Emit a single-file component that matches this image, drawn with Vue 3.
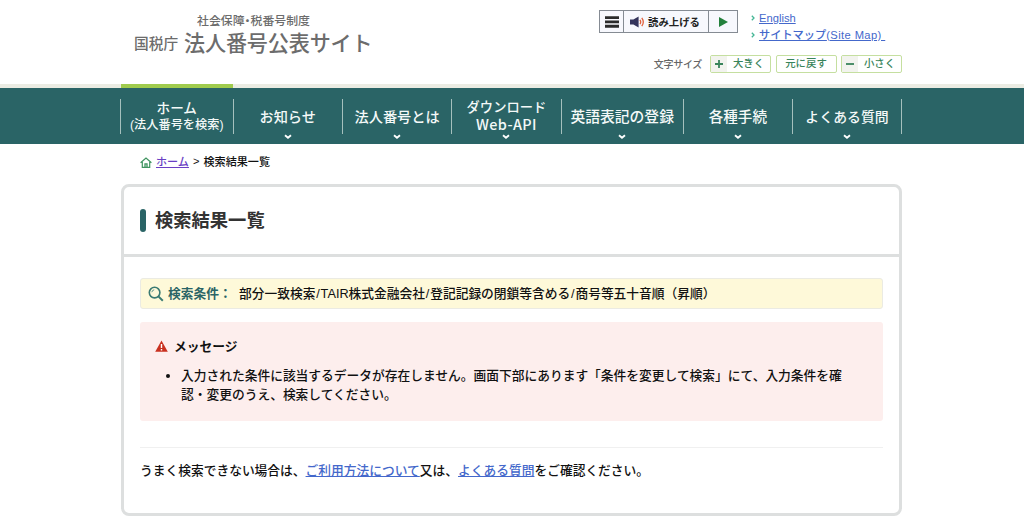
<script setup>
import { ref } from 'vue'

const menus = ref([
  { id: 'home', label: 'ホーム', sub: '(法人番号を検索)', arrow: false },
  { id: 'news', label: 'お知らせ', arrow: true },
  { id: 'about', label: '法人番号とは', arrow: true },
  { id: 'download', label: 'ダウンロード', sub: 'Web-API', arrow: true },
  { id: 'english', label: '英語表記の登録', arrow: true },
  { id: 'procedure', label: '各種手続', arrow: true },
  { id: 'faq', label: 'よくある質問', arrow: true },
])

const conditions = ref(['部分一致検索', 'TAIR株式金融会社', '登記記録の閉鎖等含める', '商号等五十音順（昇順）'])
const messages = ref([
  '入力された条件に該当するデータが存在しません。画面下部にあります「条件を変更して検索」にて、入力条件を確認・変更のうえ、検索してください。',
])
</script>

<template>
  <div class="page">
    <header class="header">
      <div class="logo">
        <p class="logo-sub">社会保障・税番号制度</p>
        <p class="logo-main"><span class="agency">国税庁</span><span class="site">法人番号公表サイト</span></p>
      </div>
      <div class="tools">
        <div class="tools-top">
          <div class="reader">
            <button class="reader-menu">
              <svg width="14" height="12" viewBox="0 0 14 12">
                <path d="M0 1.6h14M0 5.9h14M0 10.2h14" stroke="#2b2b2b" stroke-width="2.9" />
              </svg>
            </button>
            <button class="reader-main">
              <svg width="15" height="12" viewBox="0 0 15 12">
                <path d="M0 3.6h3.4L8.6 0.6v10.8L3.4 8.4H0z" fill="#34345c" />
                <path d="M10 3.8q1.4 2.2 0 4.4M11.8 1.8q3 4.2 0 8.4" fill="none" stroke="#e0603c" stroke-width="1.3" />
              </svg>
              <span>読み上げる</span>
            </button>
            <button class="reader-play">
              <svg width="9" height="10" viewBox="0 0 9 10"><path d="M0 0l9 5-9 5z" fill="#23803c" /></svg>
            </button>
          </div>
          <ul class="links">
            <li><svg width="4" height="6" viewBox="0 0 4 6"><path d="M0.8 0.8L3 3 0.8 5.2" /></svg><a href="#">English</a></li>
            <li><svg width="4" height="6" viewBox="0 0 4 6"><path d="M0.8 0.8L3 3 0.8 5.2" /></svg><a href="#">サイトマップ<span class="latin">(Site Map)&nbsp;</span></a></li>
          </ul>
        </div>
        <div class="font-size">
          <span class="font-label">文字サイズ</span>
          <button class="size-btn"><i><svg width="8" height="8" viewBox="0 0 8 8"><path d="M0 4h8M4 0v8" /></svg></i><span>大きく</span></button>
          <button class="size-btn"><span>元に戻す</span></button>
          <button class="size-btn"><i><svg width="8" height="8" viewBox="0 0 8 8"><path d="M0 4h8" /></svg></i><span>小さく</span></button>
        </div>
      </div>
    </header>

    <nav class="nav">
      <div class="nav-line"><div class="nav-current"></div></div>
      <ul class="nav-list">
        <li v-for="menu in menus" :key="menu.id" :class="menu.id">
          <span class="label">{{ menu.label }}</span>
          <span v-if="menu.sub" class="sub">{{ menu.sub }}</span>
          <svg v-if="menu.arrow" class="arrow" width="8" height="6" viewBox="0 0 8 6">
            <path d="M1 1.2l3 2.6 3-2.6" fill="none" stroke="#fff" stroke-width="1.8" />
          </svg>
        </li>
      </ul>
    </nav>

    <main class="main">
      <div class="breadcrumb">
        <svg width="12" height="11" viewBox="0 0 12 11" fill="none" stroke="#3f9460">
          <path d="M0.6 5.8L6 1l5.4 4.8M2.3 5v5.4h7.4V5" stroke-width="1.2" />
          <path d="M5 10V6.8h2V10" stroke-width="1.3" />
        </svg>
        <a href="#">ホーム</a>
        <span class="gt">&gt;</span>
        <span>検索結果一覧</span>
      </div>

      <section class="panel">
        <div class="panel-head">
          <h1>検索結果一覧</h1>
        </div>
        <div class="panel-body">
          <div class="condition">
            <svg width="16" height="16" viewBox="0 0 16 16" fill="none" stroke="#3a7a72">
              <circle cx="6.6" cy="6.6" r="5.3" stroke-width="1.6" />
              <path d="M10.4 10.4l4.4 4.4" stroke-width="2" />
              <path d="M3.8 6.2a3 3 0 0 1 2.4-2.4" stroke-width="0.8" />
            </svg>
            <strong>検索条件：</strong>
            <span class="condition-text">
              <template v-for="(item, i) in conditions" :key="item"><span v-if="i > 0" class="slash">/</span>{{ item }}</template>
            </span>
          </div>

          <div class="message">
            <div class="message-title">
              <svg width="13" height="12" viewBox="0 0 13 12">
                <path d="M6.5 0.4L12.8 11.8H0.2z" fill="#c9301f" />
                <path d="M6.5 4v4M6.5 9v1.4" stroke="#fff" stroke-width="1.4" />
              </svg>
              <span>メッセージ</span>
            </div>
            <ul>
              <li v-for="(message, i) in messages" :key="i">{{ message }}</li>
            </ul>
          </div>

          <p class="help">
            うまく検索できない場合は、<a href="#">ご利用方法について</a>又は、<a href="#">よくある質問</a>をご確認ください。
          </p>
        </div>
      </section>
    </main>
  </div>
</template>

<style>
body {
  background: #fff;
}
</style>

<style scoped>
.page {
  height: 532px;
  overflow: hidden;
  color: #111;
  font-family: 'Liberation Sans', 'Noto Sans CJK JP', sans-serif;
  font-size: 12.74px;
  font-weight: 500;
}

p,
ul,
h1 {
  margin: 0;
  padding: 0;
}

ul {
  list-style: none;
}

button {
  margin: 0;
  padding: 0;
  border: none;
  background: none;
  font: inherit;
  color: inherit;
}

svg {
  display: block;
  flex: none;
}

a {
  color: #4468cb;
  text-underline-offset: 1px;
}

/* ヘッダー */
.header {
  display: flex;
  justify-content: space-between;
  width: 781px;
  height: 84px;
  margin: 0 121px;
  box-sizing: border-box;
}

.logo {
  padding: 13px 0 0 13px;
  color: #6c6c6c;
  white-space: nowrap;
}

.logo-sub {
  padding-left: 63px;
  font-size: 11.9px;
  line-height: 16px;
  /* 中黒を半角幅に詰める */
  font-feature-settings: 'halt';
}

.logo-main {
  display: flex;
  align-items: center;
  height: 25px;
}

.agency {
  width: 50px;
  font-size: 14.7px;
  padding-top: 1px;
}

.site {
  font-size: 21.1px;
  letter-spacing: -0.15px;
}

.tools {
  width: 303px;
  padding-top: 10px;
}

.tools-top {
  display: flex;
  height: 44px;
}

.reader {
  display: flex;
  width: 139px;
  height: 23px;
  box-sizing: border-box;
  border: 1px solid #858b93;
  background: #f7f8fd;
}

.reader button {
  display: flex;
  align-items: center;
  justify-content: center;
}

.reader-menu {
  width: 23px;
}

.reader .reader-main {
  width: 86px;
  padding-right: 2px;
  border: solid #858b93;
  border-width: 0 1px;
  box-sizing: border-box;
  gap: 3px;
  color: #222;
  font-size: 10.4px;
  font-weight: bold;
  white-space: nowrap;
}

.reader-play {
  flex: 1;
}

.links {
  padding-left: 13px;
  font-size: 11.2px;
  line-height: 16px;
}

.links li {
  display: flex;
  align-items: center;
  gap: 4px;
  height: 16.5px;
  white-space: nowrap;
}

.links path {
  fill: none;
  stroke: #45b695;
  stroke-width: 1.3;
}

.latin {
  letter-spacing: 0.4px;
}

.font-size {
  display: flex;
  align-items: center;
  justify-content: flex-end;
  gap: 4.5px;
  height: 19px;
}

.font-label {
  margin-right: 3.5px;
  color: #666;
  font-size: 10px;
  letter-spacing: -0.3px;
}

.size-btn {
  display: flex;
  width: 61px;
  height: 18px;
  box-sizing: border-box;
  border: 1px solid #c5dfa0;
  border-radius: 2px;
  background: #fff;
  color: #39845b;
  font-size: 10.4px;
  line-height: 16px;
}

.size-btn i {
  display: flex;
  align-items: center;
  justify-content: center;
  width: 16px;
  height: 16px;
  background: #f2f3ee;
}

.size-btn path {
  stroke: #39845b;
  stroke-width: 1.8;
}

.size-btn span {
  flex: 1;
  text-align: center;
}

/* グローバルナビ */
.nav {
  height: 60px;
  background: #2a6466;
}

.nav-line {
  height: 4px;
  background: #ebece3;
}

.nav-current {
  width: 112px;
  height: 4px;
  margin-left: 121px;
  background: #a0cb4d;
}

.nav-list {
  display: flex;
  width: 782px;
  height: 56px;
  margin: 0 120px;
  padding-top: 11px;
  box-sizing: border-box;
}

.nav-list li {
  position: relative;
  display: flex;
  flex-direction: column;
  align-items: center;
  justify-content: center;
  width: 109.4px;
  height: 35px;
  padding-top: 1px;
  box-sizing: border-box;
  border-left: 1px solid #a5c0bd;
  color: #f4f9f8;
  font-size: 14.2px;
  line-height: 17px;
  white-space: nowrap;
}

.nav-list li.home {
  width: 112.5px;
  padding: 0;
  font-size: 13.6px;
}

.nav-list li.home .sub {
  font-size: 12.2px;
}

.nav-list li.download {
  padding: 0 0 2px;
  font-size: 13.3px;
}

.nav-list li.download .sub {
  font-family: 'Noto Sans CJK JP', sans-serif;
  font-size: 14.4px;
  line-height: 16px;
  letter-spacing: 0.4px;
}

.nav-list li.english {
  width: 122px;
  font-size: 14.8px;
}

.nav-list li.procedure {
  font-size: 14.6px;
}

.nav-list li.faq {
  flex: 1;
  border-right: 1px solid #a5c0bd;
  font-size: 13.9px;
}

/* 文字に重ならないよう下端に置く */
.arrow {
  position: absolute;
  bottom: -6px;
  left: 50%;
  margin-left: -4px;
}

/* パンくず */
.main {
  width: 781px;
  margin: 0 121px;
}

.breadcrumb {
  display: flex;
  align-items: center;
  height: 40px;
  padding: 0 0 6px 19px;
  box-sizing: border-box;
  font-size: 11.1px;
}

.breadcrumb svg {
  margin: 3px 4px 0 0;
}

.breadcrumb a {
  color: #6a3fc4;
}

.gt {
  margin: 0 4px;
}

.panel {
  height: 332px;
  box-sizing: border-box;
  border: 3px solid #dddfdf;
  border-radius: 8px;
}

.panel-head {
  height: 70px;
  padding: 22px 0 0 16px;
  box-sizing: border-box;
  border-bottom: 3px solid #dddfdf;
}

h1 {
  display: flex;
  align-items: center;
  height: 23px;
  color: #333;
  font-size: 18.3px;
  font-weight: bold;
  line-height: 20px;
}

h1::before {
  content: '';
  width: 6px;
  height: 23px;
  margin-right: 9px;
  border-radius: 3px;
  background: #2a6466;
}

.panel-body {
  padding: 21px 16px 0;
}

.condition {
  display: flex;
  align-items: center;
  height: 31px;
  padding: 0 0 2px 7px;
  box-sizing: border-box;
  border: 1px solid #ebebe3;
  border-radius: 3px;
  background: #fef9d9;
  white-space: nowrap;
}

.condition svg {
  margin-top: 2px;
}

.condition strong {
  width: 71px;
  padding-left: 4px;
  color: #2a6466;
}

.slash {
  padding: 0 0.8px;
}

.message {
  height: 99px;
  margin-top: 13px;
  padding: 14px 32px 0 15px;
  box-sizing: border-box;
  border-radius: 3px;
  background: #fdeeed;
}

.message-title {
  display: flex;
  align-items: center;
  gap: 6px;
  height: 19px;
  font-weight: bold;
}

.message ul {
  padding: 11px 0 0 26px;
  list-style: disc;
  line-height: 19px;
}

.help {
  margin-top: 26px;
  padding-top: 13px;
  border-top: 1px solid #f0f0f0;
  line-height: 19px;
}
</style>
